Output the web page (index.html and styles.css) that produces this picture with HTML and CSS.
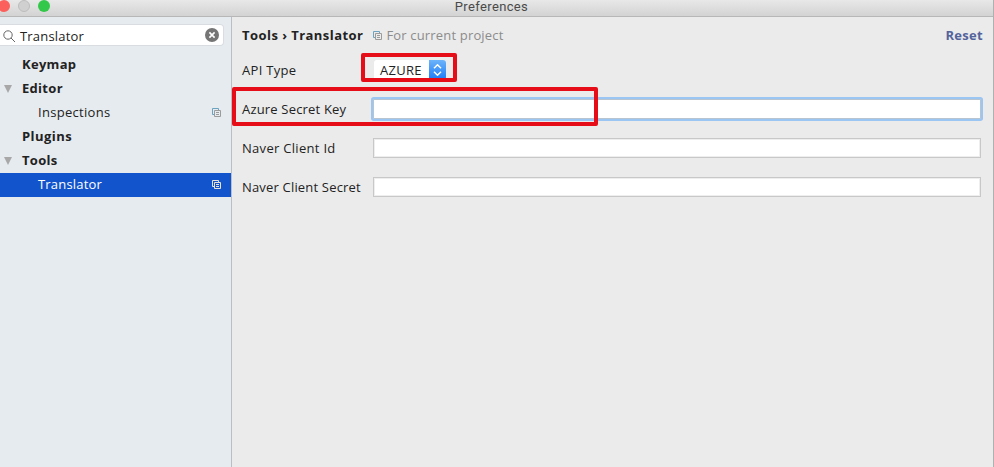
FILE: index.html
```html
<!DOCTYPE html>
<html lang="en">
<head>
<meta charset="utf-8">
<title>Preferences</title>
<link rel="stylesheet" href="styles.css">
</head>
<body>
<svg class="defs" width="0" height="0">
  <symbol id="copy" viewBox="0 0 9 9"><path class="back" d="M2 6.5H.5V.5h6V2"/><path class="front" d="M2.5 2.5h6v6h-6zM4 4.5h3M4 6.5h3"/></symbol>
</svg>
<div class="window">
  <header class="titlebar">
    <div class="lights"><i class="close"></i><i class="min"></i><i class="max"></i></div>
    <span class="title">Preferences</span>
  </header>
  <div class="body">
    <aside class="sidebar">
      <div class="search">
        <svg class="lens" width="13" height="13" viewBox="0 0 13 13"><circle cx="5" cy="5" r="4.2"/><path d="M8 8l4 4"/></svg>
        <span class="query">Translator</span>
        <svg class="clear" width="14" height="14" viewBox="0 0 14 14"><circle cx="7" cy="7" r="7"/><path d="M4.4 4.4l5.2 5.2M9.6 4.4L4.4 9.6"/></svg>
      </div>
      <ul class="tree">
        <li class="group"><span class="keymap">Keymap</span></li>
        <li class="group open"><span class="editor">Editor</span></li>
        <li class="leaf"><span class="inspections">Inspections</span><svg class="copy"><use href="#copy"/></svg></li>
        <li class="group"><span class="plugins">Plugins</span></li>
        <li class="group open"><span class="tools">Tools</span></li>
        <li class="leaf selected"><span class="translator">Translator</span><svg class="copy"><use href="#copy"/></svg></li>
      </ul>
    </aside>
    <main class="content">
      <div class="heading">
        <b class="crumb">Tools › Translator</b>
        <svg class="copy"><use href="#copy"/></svg>
        <span class="scope">For current project</span>
        <b class="reset">Reset</b>
      </div>
      <div class="form">
        <div class="row"><span class="label api">API Type</span>
          <div class="select"><span>AZURE</span><i><svg width="9" height="12" viewBox="0 0 9 12"><path d="M1 4.2l3.5-3.4L8 4.2M1 7.8l3.5 3.4L8 7.8"/></svg></i></div>
          <div class="mark mark-type"></div></div>
        <div class="row"><span class="label azure">Azure Secret Key</span><div class="field focused"></div><div class="mark mark-key"></div></div>
        <div class="row"><span class="label naver-id">Naver Client Id</span><div class="field"></div></div>
        <div class="row"><span class="label naver-secret">Naver Client Secret</span><div class="field"></div></div>
      </div>
    </main>
  </div>
</div>
</body>
</html>
```
FILE: styles.css
```css
* { box-sizing: border-box; }
body { margin: 0; font: 13px/18px "Open Sans", "Noto Sans", sans-serif; color: #222; letter-spacing: .3px; white-space: nowrap; }
.defs { position: absolute; }
.window { width: 994px; height: 467px; overflow: hidden; display: flex; flex-direction: column; background: #ebebeb; border-right: 1px solid #b0b0b0; }
.titlebar { height: 17px; flex: none; display: flex; justify-content: center; position: relative; border-bottom: 1px solid #b7b7b7; background: linear-gradient(#e8e8e8, #d3d3d3); }
.lights { position: absolute; left: -2px; top: 0; display: flex; gap: 8px; }
.lights i { width: 12px; height: 12px; border-radius: 50%; }
.close { background: #fc605c; }
.min { background: #d0d0d0; border: 1px solid #bdbdbd; }
.max { background: #34c84a; }
.title { height: 13px; margin-left: -10px; font: 13px/13px Roboto, sans-serif; color: #4a4a4a; letter-spacing: .36px; }
.body { flex: 1; display: flex; }
.sidebar { width: 232px; flex: none; background: #e6ebef; border-right: 1px solid #b9bfc5; padding-top: 8px; }
.search { height: 20px; width: 223px; background: #fff; border-radius: 0 3px 3px 0; box-shadow: 0 0 0 1px #d9dde1; display: flex; align-items: center; padding: 0 4px 0 3px; }
.query { margin-left: 4px; flex: 1; padding-top: 1px; letter-spacing: .2px; }
.lens { fill: none; stroke: #666; margin-top: 3px; }
.clear { fill: #757575; }
.clear path { stroke: #fff; stroke-width: 1.6; }
.tree { list-style: none; margin: 8px 0 0; padding: 0; }
.tree li { height: 24px; display: flex; align-items: center; justify-content: space-between; padding: 0 10px 2px 22px; position: relative; }
.tree .group { font-weight: 700; }
.tree .leaf { padding-left: 38px; }
.plugins { letter-spacing: .45px; }
.translator { letter-spacing: .2px; }
.open::before { content: ""; position: absolute; left: 4px; top: 8px; border: 4.5px solid transparent; border-top: 8px solid #a8a8a8; border-bottom: 0; }
.copy { width: 9px; height: 9px; fill: none; color: #6ba3c0; stroke: #9b9b9b; flex: none; }
.back { stroke: currentColor; }
.tree .copy { margin-top: 1px; }
.tree .selected { background: #1254cc; color: #fff; }
.tree .selected .copy { stroke: #e8e4dc; color: #e8e4dc; }
.content { flex: 1; padding: 8px 10px 0; }
.heading { display: flex; align-items: center; height: 20px; }
.crumb { letter-spacing: .45px; }
.heading .copy { margin-left: 10px; margin-top: 1px; }
.scope { color: #8c8c8c; margin-left: 4px; letter-spacing: .17px; }
.reset { color: #53639c; margin-left: auto; }
.form { padding-top: 5px; }
.row { display: flex; align-items: center; height: 39px; position: relative; padding-right: 2px; }
.label { width: 131px; flex: none; }
.azure, .naver-secret { letter-spacing: .18px; }
.field { flex: 1; height: 20px; background: #fff; border: 1px solid #c8c8c8; box-shadow: inset 0 0 0 1px #eee; }
.focused { border-color: #b8c4d0; box-shadow: 0 0 0 2px #9bc5f2; border-radius: 1px; }
.select { display: flex; width: 72px; height: 20px; margin-left: 1px; background: #fff; border-radius: 3px; align-items: center; padding-left: 6px; justify-content: space-between; }
.select i { width: 17px; height: 20px; background: linear-gradient(#6cb3fa, #1a7bf8); border-radius: 0 3px 3px 0; display: flex; align-items: center; justify-content: center; }
.select path { fill: none; stroke: #fff; stroke-width: 1.5; }
.mark { position: absolute; border: 4px solid #e60c18; border-radius: 2px; }
.mark-type { left: 119px; top: 3px; width: 96px; height: 29px; }
.mark-key { left: -10px; top: -2px; width: 366px; height: 39px; }
```
